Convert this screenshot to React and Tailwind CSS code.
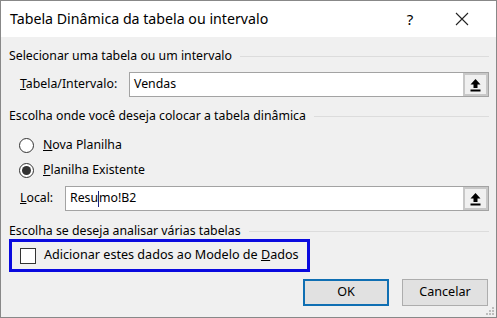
import React from 'react';

const font = { fontFamily: '"Noto Sans", "Open Sans", sans-serif' };

const UploadIcon = () => (
  <svg width="11" height="14" viewBox="0 0 11 14">
    <path d="M5.5 1 L10.5 6.5 L7.5 6.5 L7.5 10 L3.5 10 L3.5 6.5 L0.5 6.5 Z" fill="#000" />
    <rect x="0.5" y="11.5" width="10" height="2" fill="#000" />
  </svg>
);

const SectionHeader = ({ children, className = '' }) => (
  <div className={`flex items-center h-[18px] ${className}`}>
    <span className="whitespace-nowrap">{children}</span>
    <div className="flex-1 h-px bg-[#dcdcdc] ml-[8px]" />
  </div>
);

const RefInput = ({ children, className = '' }) => (
  <div className={`flex h-[25px] bg-white border border-[#a3a3a3] ${className}`}>
    <div className="flex-1 flex items-center pl-[4px]">{children}</div>
    <div className="w-[25px] h-full flex items-center justify-center bg-[#f0f0f0] border-2 border-[#c8c8c8]">
      <UploadIcon />
    </div>
  </div>
);

const Radio = ({ checked, children }) => (
  <div className="flex items-center h-[25px] pl-[10px]">
    <div className="w-[15px] h-[15px] rounded-full border border-[#333] bg-white flex items-center justify-center">
      {checked && <div className="w-[9px] h-[9px] rounded-full bg-[#333]" />}
    </div>
    <span className="ml-[9px]">{children}</span>
  </div>
);

export default function App() {
  return (
    <div className="w-[497px] h-[318px] border border-[#888] flex flex-col text-[12.3px] text-black" style={font}>
      {/* barra de título */}
      <div className="h-[36px] bg-white flex items-center pl-[9px] shrink-0">
        <span className="text-[14.2px] flex-1">Tabela Dinâmica da tabela ou intervalo</span>
        <span className="text-[15px] w-[20px] text-center mr-[35px]">?</span>
        <svg width="14" height="14" viewBox="0 0 14 14" className="mr-[27px]">
          <path d="M1 1 L13 13 M13 1 L1 13" stroke="#222" strokeWidth="1.1" />
        </svg>
      </div>

      <div className="flex-1 bg-[#f0f0f0] flex flex-col pl-[8px] pr-[7px] relative">
        <SectionHeader className="mt-[10px]">Selecionar uma tabela ou um intervalo</SectionHeader>
        <div className="flex items-center mt-[7px]">
          <span className="pl-[11px] w-[120px]"><u>T</u>abela/Intervalo:</span>
          <RefInput className="flex-1">Vendas</RefInput>
        </div>

        <SectionHeader className="mt-[10px]">Escolha onde você deseja colocar a tabela dinâmica</SectionHeader>
        <div className="mt-[8px]">
          <Radio><u>N</u>ova Planilha</Radio>
          <Radio checked><u>P</u>lanilha Existente</Radio>
        </div>
        <div className="flex items-center mt-[3px]">
          <span className="pl-[11px] w-[56px]"><u>L</u>ocal:</span>
          <RefInput className="flex-1">
            <span>Resu</span>
            <span className="inline-block w-px h-[16px] bg-[#1a237e]" />
            <span>mo!B2</span>
          </RefInput>
        </div>

        <SectionHeader className="mt-[11px]">Escolha se deseja analisar várias tabelas</SectionHeader>
        <div className="mt-[-1px] w-[301px] h-[33px] border-[3px] border-[#0a0adf] flex items-center pl-[8px]">
          <div className="w-[16px] h-[16px] border border-[#333] bg-white" />
          <span className="ml-[8px] text-[12.6px]">Adicionar estes dados ao Modelo de <u>D</u>ados</span>
        </div>

        <div className="flex justify-end mt-[7px] gap-[13px] pr-[1px]">
          <button className="w-[86px] h-[27px] bg-[#e1e1e1] border-2 border-[#0f6fb3] text-[12.6px]">OK</button>
          <button className="w-[86px] h-[27px] bg-[#e1e1e1] border border-[#adadad] text-[12.6px]">Cancelar</button>
        </div>

        {/* alça de redimensionar */}
        <svg width="9" height="9" viewBox="0 0 9 9" className="absolute right-[1px] bottom-[1px]">
          <rect x="6" y="0" width="2" height="2" fill="#bdbdbd" />
          <rect x="3" y="3" width="2" height="2" fill="#bdbdbd" />
          <rect x="6" y="3" width="2" height="2" fill="#bdbdbd" />
          <rect x="0" y="6" width="2" height="2" fill="#bdbdbd" />
          <rect x="3" y="6" width="2" height="2" fill="#bdbdbd" />
          <rect x="6" y="6" width="2" height="2" fill="#bdbdbd" />
        </svg>
      </div>
    </div>
  );
}
